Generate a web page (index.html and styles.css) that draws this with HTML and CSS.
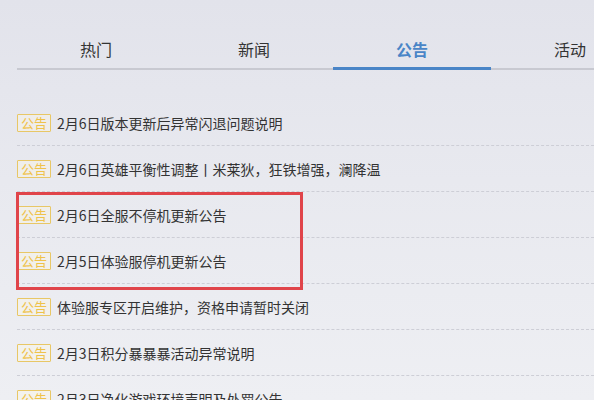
FILE: index.html
```html
<!DOCTYPE html>
<html lang="zh-CN">
<head>
<meta charset="utf-8">
<title>公告</title>
<link rel="stylesheet" href="styles.css">
</head>
<body>
<div class="page">
  <nav class="tabs">
    <div class="tab">热门</div>
    <div class="tab">新闻</div>
    <div class="tab active">公告</div>
    <div class="tab">活动</div>
  </nav>
  <ul class="list">
    <li class="row"><span class="badge">公告</span><span class="title">2月6日版本更新后异常闪退问题说明</span></li>
    <li class="row"><span class="badge">公告</span><span class="title">2月6日英雄平衡性调整丨米莱狄，狂铁增强，澜降温</span></li>
    <li class="row"><span class="badge">公告</span><span class="title">2月6日全服不停机更新公告</span></li>
    <li class="row"><span class="badge">公告</span><span class="title">2月5日体验服停机更新公告</span></li>
    <li class="row"><span class="badge">公告</span><span class="title">体验服专区开启维护，资格申请暂时关闭</span></li>
    <li class="row"><span class="badge">公告</span><span class="title">2月3日积分暴暴暴活动异常说明</span></li>
    <li class="row"><span class="badge">公告</span><span class="title">2月3日净化游戏环境声明及处罚公告</span></li>
  </ul>
  <div class="highlight"></div>
</div>
</body>
</html>
```

FILE: styles.css
```css
html, body {
  margin: 0;
  padding: 0;
  height: 100%;
  overflow: hidden;
}
body {
  background: linear-gradient(180deg, #e2e3eb 0%, #e8e9ef 45%, #eeeff3 100%);
  font-family: "Noto Sans CJK SC", "Noto Sans", sans-serif;
  color: #333;
}
.page {
  position: relative;
  height: 400px;
  padding-top: 30px;
  box-sizing: border-box;
  overflow: hidden;
}
.tabs {
  display: flex;
  margin: 0 0 0 17px;
  border-bottom: 2px solid #c8c9d1;
  height: 38px;
}
.tab {
  position: relative;
  flex: 0 0 158px;
  text-align: center;
  line-height: 38px;
  font-size: 16px;
  color: #333;
}
.tab.active {
  color: #4a85c7;
  font-weight: bold;
}
.tab.active::after {
  content: "";
  position: absolute;
  left: 0;
  right: 0;
  bottom: -2px;
  height: 3px;
  background: #4a85c7;
}
.list {
  list-style: none;
  margin: 30px 0 0 17px;
  padding: 0;
}
.row {
  display: flex;
  align-items: center;
  height: 45px;
  border-bottom: 1px dashed #cdced6;
}
.badge {
  box-sizing: border-box;
  width: 34px;
  height: 18px;
  border: 1px solid #e8c766;
  border-radius: 1px;
  color: #efc24a;
  background: rgba(255, 248, 225, 0.35);
  font-size: 13px;
  line-height: 16px;
  text-align: center;
  flex: 0 0 auto;
}
.title {
  margin-left: 6px;
  font-size: 14px;
  color: #333;
  white-space: nowrap;
}
.highlight {
  position: absolute;
  left: 16px;
  top: 192px;
  width: 287px;
  height: 98px;
  box-sizing: border-box;
  border: 3px solid #e0444a;
}
```
